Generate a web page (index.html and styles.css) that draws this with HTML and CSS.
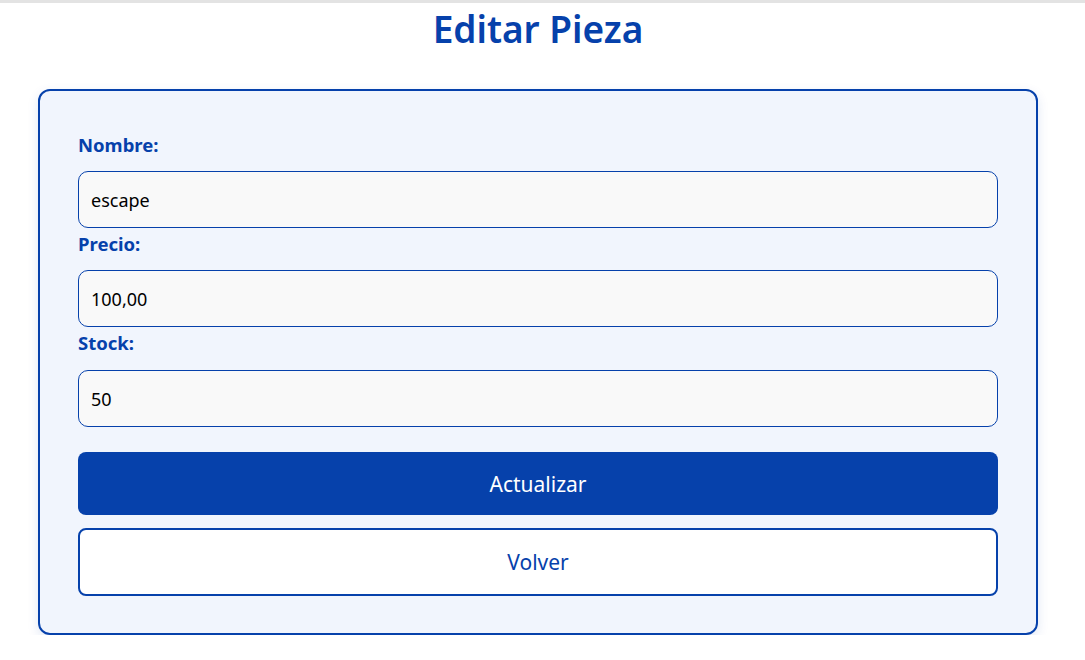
FILE: index.html
```html
<!DOCTYPE html>
<html lang="es">
<head>
<meta charset="utf-8">
<title>Editar Pieza</title>
<link rel="stylesheet" href="styles.css">
</head>
<body>
<div class="topline"></div>
<main class="page">
  <h1 class="title">Editar Pieza</h1>
  <form class="card">
    <label class="label" for="nombre">Nombre:</label>
    <input class="field" id="nombre" type="text" value="escape">
    <label class="label" for="precio">Precio:</label>
    <input class="field" id="precio" type="text" value="100,00">
    <label class="label label-last" for="stock">Stock:</label>
    <input class="field" id="stock" type="text" value="50">
    <button class="btn btn-primary" type="button">Actualizar</button>
    <button class="btn btn-secondary" type="button">Volver</button>
  </form>
</main>
</body>
</html>
```
FILE: styles.css
```css
* { box-sizing: border-box; }
html, body { margin: 0; padding: 0; background: #ffffff; }
body {
  font-family: "Noto Sans", "Open Sans", sans-serif;
  color: #000;
}
.topline {
  height: 3px;
  background: #e3e3e3;
}
.page {
  width: 1076px;
  display: flex;
  flex-direction: column;
  align-items: center;
}
.title {
  margin: 0;
  height: 55px;
  font-size: 37px;
  line-height: 52px;
  font-weight: 600;
  color: #0641ab;
}
.card {
  margin-top: 31px;
  width: 1000px;
  background: #f1f5fd;
  border: 2px solid #0641ab;
  border-radius: 12px;
  box-shadow: 0 4px 12px rgba(6, 65, 171, 0.12);
  padding: 38px 38px 37px;
  display: flex;
  flex-direction: column;
}
.label {
  display: block;
  font-size: 18.5px;
  font-weight: 700;
  color: #0641ab;
  line-height: 31px;
  height: 42px;
}
.label-last { height: 43px; }
.field {
  display: block;
  width: 100%;
  height: 57px;
  border: 1px solid #0641ab;
  border-radius: 10px;
  background: #f9f9f9;
  padding: 0 12px;
  font-family: inherit;
  font-size: 18px;
  color: #000;
}
.btn {
  display: block;
  width: 100%;
  font-family: inherit;
  font-size: 21px;
  border-radius: 8px;
  cursor: pointer;
}
.btn-primary {
  margin-top: 25px;
  height: 63px;
  background: #0641ab;
  color: #ffffff;
  border: none;
}
.btn-secondary {
  margin-top: 13px;
  height: 68px;
  background: #ffffff;
  color: #0641ab;
  border: 2px solid #0641ab;
}
```
